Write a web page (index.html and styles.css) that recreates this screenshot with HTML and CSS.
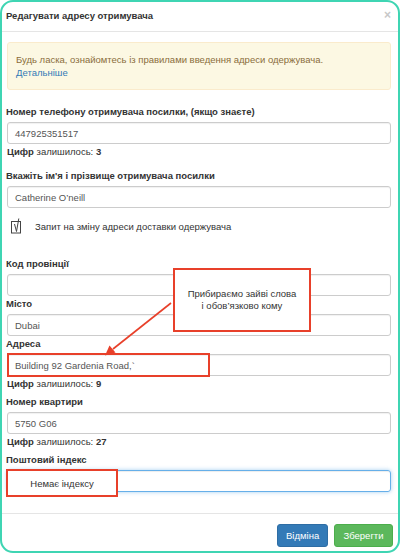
FILE: index.html
```html
<!DOCTYPE html>
<html lang="uk">
<head>
<meta charset="utf-8">
<title>Редагувати адресу отримувача</title>
<link rel="stylesheet" href="styles.css">
</head>
<body>
<div class="modal">
  <div class="modal-header">
    <span class="modal-title">Редагувати адресу отримувача</span>
    <span class="close">×</span>
  </div>
  <div class="modal-body">
    <div class="alert">
      Будь ласка, ознайомтесь із правилами введення адреси одержувача.<br>
      <a class="alert-link" href="#">Детальніше</a>
    </div>

    <label class="label label-first">Номер телефону отримувача посилки, (якщо знаєте)</label>
    <div class="input">447925351517</div>
    <div class="help"><b>Цифр</b> залишилось: <b>3</b></div>

    <label class="label label-gap">Вкажіть ім'я і прізвище отримувача посилки</label>
    <div class="input">Catherine O’neill</div>

    <div class="check-row">
      <svg class="check" width="16" height="20" viewBox="0 0 16 20">
        <rect x="2.5" y="6.5" width="9" height="11.5" fill="none" stroke="#444" stroke-width="1"/>
        <polyline points="5.5,9 7.5,16.5 9.8,3.5" fill="none" stroke="#444" stroke-width="1"/>
      </svg>
      <span class="check-label">Запит на зміну адреси доставки одержувача</span>
    </div>

    <label class="label label-province">Код провінції</label>
    <div class="input"></div>

    <label class="label label-tight">Місто</label>
    <div class="input">Dubai</div>

    <label class="label label-tight">Адреса</label>
    <div class="input">Building 92 Gardenia Road,`</div>
    <div class="help"><b>Цифр</b> залишилось: <b>9</b></div>

    <label class="label label-small-gap">Номер квартири</label>
    <div class="input">5750 G06</div>
    <div class="help"><b>Цифр</b> залишилось: <b>27</b></div>

    <label class="label label-small-gap">Поштовий індекс</label>
    <div class="input input-focus"></div>
  </div>
  <div class="modal-footer">
    <button class="btn btn-primary">Відміна</button>
    <button class="btn btn-success">Зберегти</button>
  </div>

  <div class="callout">Прибираємо зайві слова<br>і обов’язково кому</div>
  <div class="mark mark-address"></div>
  <div class="mark mark-zip">Немає індексу</div>
  <svg class="arrow" width="400" height="553" viewBox="0 0 400 553">
    <line x1="171" y1="303" x2="113" y2="349" stroke="#e8402a" stroke-width="1.6"/>
    <polygon points="105,355.5 109.5,345.5 115.5,352.5" fill="#e8402a"/>
  </svg>
</div>
</body>
</html>
```

FILE: styles.css
```css
* { box-sizing: border-box; }

html, body {
  margin: 0;
  padding: 0;
  background: #fff;
}

body {
  font-family: "Liberation Sans", Arial, sans-serif;
  font-size: 9.5px;
  line-height: 13px;
  color: #333;
}

.modal {
  position: relative;
  width: 400px;
  height: 553px;
  border: 2px solid #3fd5b3;
  border-radius: 13px;
  overflow: hidden;
  background: #fff;
}

.modal-header {
  height: 30px;
  border-bottom: 1px solid #e5e5e5;
  display: flex;
  align-items: center;
  justify-content: space-between;
  padding: 0 7px 2px 4px;
}

.modal-title {
  font-weight: bold;
}

.close {
  font-size: 12px;
  font-weight: bold;
  color: #c8c8c8;
}

.modal-body {
  padding: 10px 5px 0 5px;
  height: 481px;
}

.alert {
  background: #fcf8e3;
  border: 1px solid #faebcc;
  border-radius: 3px;
  color: #8a6d3b;
  padding: 10px 9px 10px 8px;
  margin: 0 2px 0 0;
  height: 48px;
}

.alert-link {
  color: #337ab7;
  text-decoration: none;
}

.label {
  display: block;
  font-weight: bold;
  margin: 0 0 4px -1px;
}

.label-first { margin-top: 15px; }
.label-gap { margin-top: 11px; }
.label-province { margin-top: 21px; }
.label-tight { margin-top: 1px; }
.label-small-gap { margin-top: 5px; }

.input {
  height: 22px;
  border: 1px solid #ccc;
  border-radius: 3px;
  padding: 0 7px;
  display: flex;
  align-items: center;
  color: #555;
  margin-right: 2px;
  box-shadow: inset 0 1px 1px rgba(0,0,0,.06);
}

.input-focus {
  border-color: #66afe9;
  box-shadow: inset 0 1px 1px rgba(0,0,0,.075), 0 0 4px rgba(102,175,233,.6);
}

.help {
  color: #333;
  margin-top: 1px;
}

.check-row {
  display: flex;
  align-items: center;
  margin-top: 4px;
  height: 24px;
}

.check {
  margin-left: 2px;
  margin-top: 2px;
}

.check-label {
  margin-left: 10px;
  padding-top: 5px;
}

.modal-footer {
  border-top: 1px solid #e5e5e5;
  display: flex;
  justify-content: flex-end;
  gap: 6px;
  padding: 10px 5px 0 0;
}

.btn {
  font-family: "Liberation Sans", Arial, sans-serif;
  font-size: 9.5px;
  height: 23px;
  border-radius: 3px;
  color: #fff;
  padding: 0 8px;
  border: 1px solid transparent;
}

.btn-primary {
  background: #337ab7;
  border-color: #2e6da4;
  width: 51px;
}

.btn-success {
  background: #5cb85c;
  border-color: #4cae4c;
  width: 59px;
}

/* Annotation overlays */
.callout {
  position: absolute;
  left: 171px;
  top: 266px;
  width: 138px;
  height: 64px;
  border: 2px solid #e8402a;
  background: #fff;
  display: flex;
  align-items: center;
  justify-content: center;
  text-align: center;
  line-height: 12px;
  color: #333;
}

.mark {
  position: absolute;
  border: 2px solid #e8402a;
}

.mark-address {
  left: 5px;
  top: 351px;
  width: 203px;
  height: 24px;
}

.mark-zip {
  left: 4px;
  top: 467px;
  width: 112px;
  height: 28px;
  background: #fff;
  display: flex;
  align-items: center;
  justify-content: center;
  color: #333;
  padding-top: 1px;
}

.arrow {
  position: absolute;
  left: -2px;
  top: -2px;
  pointer-events: none;
}
```
